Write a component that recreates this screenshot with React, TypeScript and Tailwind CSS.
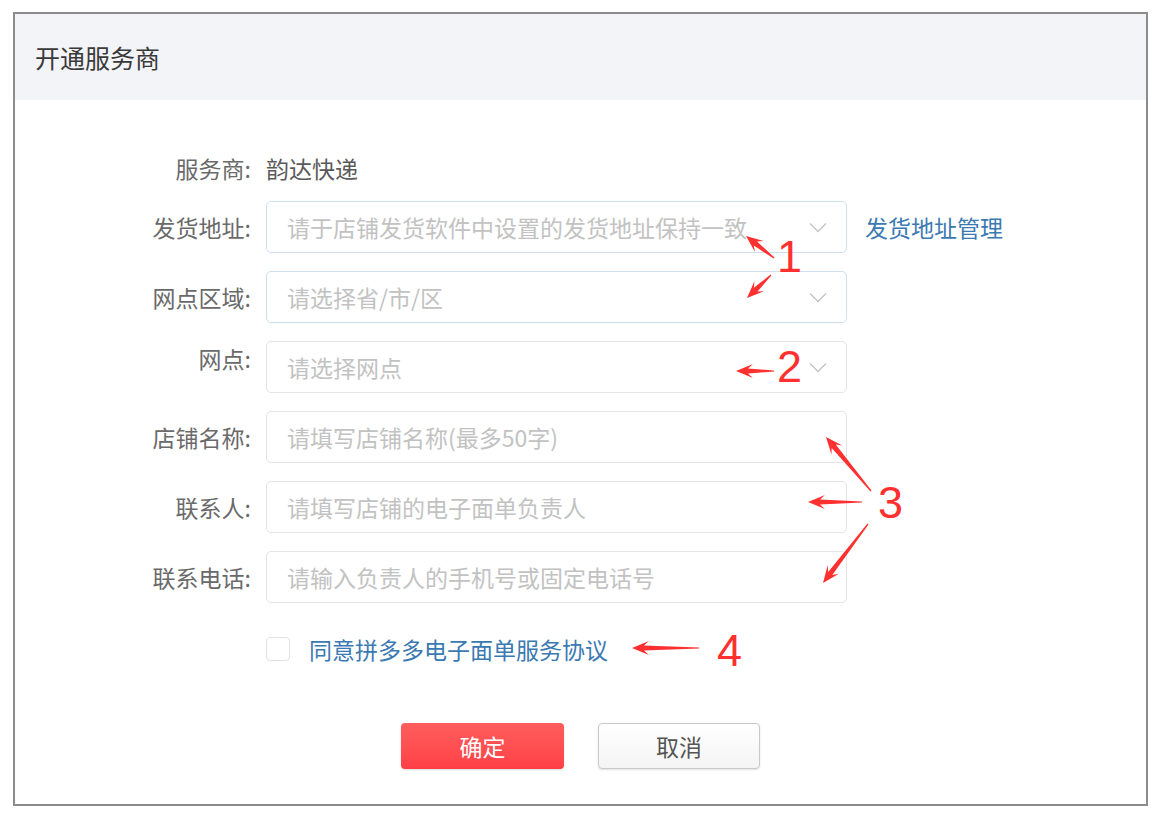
import React from "react";

const CJK = { fontFamily: '"Noto Sans CJK SC", "Noto Sans", sans-serif' };

// annotation arrows: tail -> head, in page coordinates
const ARROWS: [number, number, number, number][] = [
  [774, 258, 746, 236],
  [771, 275, 747, 298],
  [774, 371, 736, 371],
  [871, 491, 826, 437],
  [862, 502, 808, 502],
  [868, 524, 823, 583],
  [699, 648, 632, 648],
];

const arrowPoints = (x1: number, y1: number, x2: number, y2: number) => {
  const dx = x2 - x1;
  const dy = y2 - y1;
  const len = Math.hypot(dx, dy);
  const ux = dx / len;
  const uy = dy / len;
  const nx = -uy;
  const ny = ux;
  const headLen = 17;
  const headW = 7;
  const bx = x2 - ux * headLen;
  const by = y2 - uy * headLen;
  const pts = [
    [x1 + nx * 0.6, y1 + ny * 0.6],
    [bx + ux * 5 + nx * 2.6, by + uy * 5 + ny * 2.6],
    [bx + nx * headW, by + ny * headW],
    [x2, y2],
    [bx - nx * headW, by - ny * headW],
    [bx + ux * 5 - nx * 2.6, by + uy * 5 - ny * 2.6],
    [x1 - nx * 0.6, y1 - ny * 0.6],
  ];
  return pts.map((p) => `${p[0].toFixed(1)},${p[1].toFixed(1)}`).join(" ");
};

const Chevron = () => (
  <svg width="18" height="11" viewBox="0 0 18 11" className="shrink-0">
    <path d="M1 1.5 L9 9.5 L17 1.5" fill="none" stroke="#c4c4c4" strokeWidth="1.4" />
  </svg>
);

const Field = ({
  label,
  placeholder,
  select,
  blue,
  labelUp,
  extra,
}: {
  label: string;
  placeholder: string;
  select?: boolean;
  blue?: boolean;
  labelUp?: boolean;
  extra?: React.ReactNode;
}) => (
  <div className="flex items-center h-[52px]">
    <div
      className={`w-[236px] text-right text-[23px] leading-none text-[#6a6a6a] ${labelUp ? "mb-[18px]" : ""}`}
    >
      {label}
    </div>
    <div
      className={`ml-[15px] w-[581px] h-[52px] rounded-[5px] border ${blue ? "border-[#cddff0]" : "border-[#e4e4e4]"} bg-white flex items-center pl-[20px] pr-[19px]`}
    >
      <span className="flex-1 text-[23px] leading-none text-[#c2c2c2] whitespace-nowrap">{placeholder}</span>
      {select && <Chevron />}
    </div>
    {extra}
  </div>
);

export default function App() {
  return (
    <div className="relative w-[1168px] h-[820px] bg-white overflow-hidden" style={CJK}>
      <div className="ml-[13px] mt-[12px] w-[1135px] h-[794px] border-2 border-[#8c8c8c] bg-white flex flex-col">
        <div className="h-[86px] bg-[#f3f4f8] flex items-center pl-[20px]">
          <span className="text-[25px] leading-none text-[#3a3a3a]">开通服务商</span>
        </div>

        <div className="pt-[53px] flex flex-col">
          <div className="flex items-center h-[30px] mb-[18px]">
            <div className="w-[236px] text-right text-[23px] leading-none text-[#6a6a6a]">服务商:</div>
            <div className="ml-[15px] text-[23px] leading-none text-[#5a5a5a]">韵达快递</div>
          </div>

          <div className="flex flex-col gap-[18px]">
            <Field
              label="发货地址:"
              placeholder="请于店铺发货软件中设置的发货地址保持一致"
              select
              blue
              extra={
                <span className="ml-[18px] text-[23px] leading-none text-[#3a79b2]">发货地址管理</span>
              }
            />
            <Field label="网点区域:" placeholder="请选择省/市/区" select blue />
            <Field label="网点:" placeholder="请选择网点" select labelUp />
            <Field label="店铺名称:" placeholder="请填写店铺名称(最多50字)" />
            <Field label="联系人:" placeholder="请填写店铺的电子面单负责人" />
            <Field label="联系电话:" placeholder="请输入负责人的手机号或固定电话号" />
          </div>

          <div className="flex items-center mt-[34px] pl-[251px]">
            <div className="w-[24px] h-[24px] rounded-[4px] border border-[#e2e2e2] bg-white" />
            <span className="ml-[19px] text-[23px] leading-none text-[#3a79b2]">同意拼多多电子面单服务协议</span>
          </div>

          <div className="flex justify-center gap-[34px] mt-[62px]">
            <button className="w-[163px] h-[46px] rounded-[4px] bg-gradient-to-b from-[#ff5d5d] to-[#ff4046] text-white text-[23px] leading-none shadow-[0_1px_2px_rgba(0,0,0,0.15)]">
              确定
            </button>
            <button className="w-[162px] h-[46px] rounded-[4px] border border-[#c9c9c9] bg-gradient-to-b from-white to-[#f4f4f4] text-[#555] text-[23px] leading-none shadow-[0_1px_2px_rgba(0,0,0,0.12)]">
              取消
            </button>
          </div>
        </div>
      </div>

      {/* red annotations */}
      <svg className="absolute left-0 top-0 pointer-events-none" width="1168" height="820">
        {ARROWS.map((a, i) => (
          <polygon key={i} points={arrowPoints(a[0], a[1], a[2], a[3])} fill="#ff3030" />
        ))}
      </svg>
      <span
        className="absolute left-[777px] top-[234px] text-[45px] leading-none text-[#ff3030]"
        style={{ fontFamily: '"Liberation Sans", sans-serif' }}
      >
        1
      </span>
      <span
        className="absolute left-[777px] top-[344px] text-[45px] leading-none text-[#ff3030]"
        style={{ fontFamily: '"Liberation Sans", sans-serif' }}
      >
        2
      </span>
      <span
        className="absolute left-[878px] top-[480px] text-[45px] leading-none text-[#ff3030]"
        style={{ fontFamily: '"Liberation Sans", sans-serif' }}
      >
        3
      </span>
      <span
        className="absolute left-[717px] top-[628px] text-[45px] leading-none text-[#ff3030]"
        style={{ fontFamily: '"Liberation Sans", sans-serif' }}
      >
        4
      </span>
    </div>
  );
}
